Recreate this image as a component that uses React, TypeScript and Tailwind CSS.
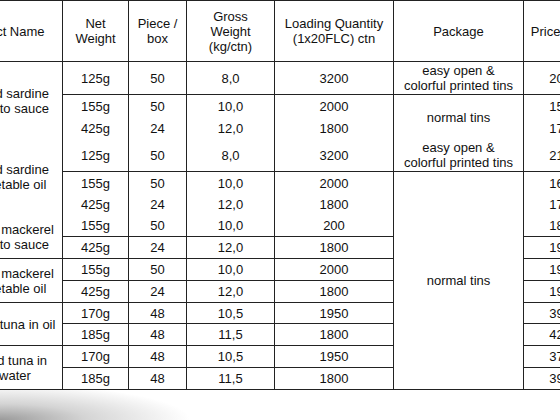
import React from "react";

// atomic row grid shared by the value columns (height + whether a rule is drawn under it)
const rows = [
  { h: "h-[33px]", line: true },
  { h: "h-[23px]", line: false },
  { h: "h-[21px]", line: false },
  { h: "h-[33px]", line: true },
  { h: "h-[22px]", line: false },
  { h: "h-[21px]", line: false },
  { h: "h-[22px]", line: true },
  { h: "h-[22px]", line: true },
  { h: "h-[22px]", line: true },
  { h: "h-[22px]", line: true },
  { h: "h-[21px]", line: true },
  { h: "h-[22px]", line: true },
  { h: "h-[22px]", line: true },
  { h: "h-[22px]", line: true },
];

const valueCols = [
  {
    w: "w-[66px]",
    head: ["Net", "Weight"],
    values: ["125g", "155g", "425g", "125g", "155g", "425g", "155g", "425g", "155g", "425g", "170g", "185g", "170g", "185g"],
  },
  {
    w: "w-[58px]",
    head: ["Piece /", "box"],
    values: ["50", "50", "24", "50", "50", "24", "50", "24", "50", "24", "48", "48", "48", "48"],
  },
  {
    w: "w-[88px]",
    head: ["Gross", "Weight", "(kg/ctn)"],
    values: ["8,0", "10,0", "12,0", "8,0", "10,0", "12,0", "10,0", "12,0", "10,0", "12,0", "10,5", "11,5", "10,5", "11,5"],
  },
  {
    w: "w-[119px]",
    head: ["Loading Quantity", "(1x20FLC) ctn"],
    values: ["3200", "2000", "1800", "3200", "2000", "1800", "200", "1800", "2000", "1800", "1950", "1800", "1950", "1800"],
  },
];

const prices = ["20.50", "15.50", "17.50", "21.50", "16.50", "17.50", "18.50", "19.50", "19.50", "19.50", "39.50", "42.50", "37.50", "39.50"];

const products = [
  { h: "h-[77px]", line: false, name: ["Canned sardine", "in tomato sauce"] },
  { h: "h-[76px]", line: false, name: ["Canned sardine", "in vegetable oil"] },
  { h: "h-[44px]", line: true, name: ["Canned mackerel", "in tomato sauce"] },
  { h: "h-[44px]", line: true, name: ["Canned mackerel", "in vegetable oil"] },
  { h: "h-[43px]", line: true, name: ["Canned tuna in oil"] },
  { h: "h-[44px]", line: true, name: ["Canned tuna in", "salt water"] },
];

const packages = [
  { h: "h-[33px]", line: true, text: ["easy open &", "colorful printed tins"] },
  { h: "h-[44px]", line: false, text: ["normal tins"] },
  { h: "h-[33px]", line: true, text: ["easy open &", "colorful printed tins"] },
  { h: "h-[218px]", line: true, text: ["normal tins"] },
];

function Cell({ h, line, lines }: { h: string; line: boolean; lines: string[] }) {
  return (
    <div
      className={`${h} shrink-0 flex flex-col items-center justify-center text-center leading-[15px] whitespace-nowrap ${
        line ? "border-b border-[#222]" : ""
      }`}
    >
      {lines.map((t, i) => (
        <div key={i}>{t}</div>
      ))}
    </div>
  );
}

function Column({ w, children }: { w: string; children: React.ReactNode }) {
  return <div className={`${w} shrink-0 flex flex-col border-r border-[#222]`}>{children}</div>;
}

export default function App() {
  return (
    <div className="w-[560px] h-[420px] overflow-hidden bg-white text-[13px] text-[#111] font-['Liberation_Sans',Arial,sans-serif]">
      <div className="flex -ml-[56px] border-t border-[#222]">
        <Column w="w-[119px]">
          <Cell h="h-[61px]" line lines={["Product Name"]} />
          {products.map((p, i) => (
            <Cell key={i} h={p.h} line={p.line} lines={p.name} />
          ))}
        </Column>

        {valueCols.map((c, ci) => (
          <Column key={ci} w={c.w}>
            <Cell h="h-[61px]" line lines={c.head} />
            {rows.map((r, ri) => (
              <Cell key={ri} h={r.h} line={r.line} lines={[c.values[ri]]} />
            ))}
          </Column>
        ))}

        <Column w="w-[130px]">
          <Cell h="h-[61px]" line lines={["Package"]} />
          {packages.map((p, i) => (
            <Cell key={i} h={p.h} line={p.line} lines={p.text} />
          ))}
        </Column>

        <Column w="w-[84px]">
          <Cell h="h-[61px]" line lines={["Price (USD)"]} />
          {rows.map((r, ri) => (
            <Cell key={ri} h={r.h} line={r.line} lines={[prices[ri]]} />
          ))}
        </Column>
      </div>
      {/* grey smudge of the photo's corner under the table */}
      <div className="h-[30px] w-full bg-[radial-gradient(ellipse_190px_36px_at_0%_100%,#9a9a9a_0%,#d4d4d4_45%,#ffffff_100%)]" />
    </div>
  );
}
